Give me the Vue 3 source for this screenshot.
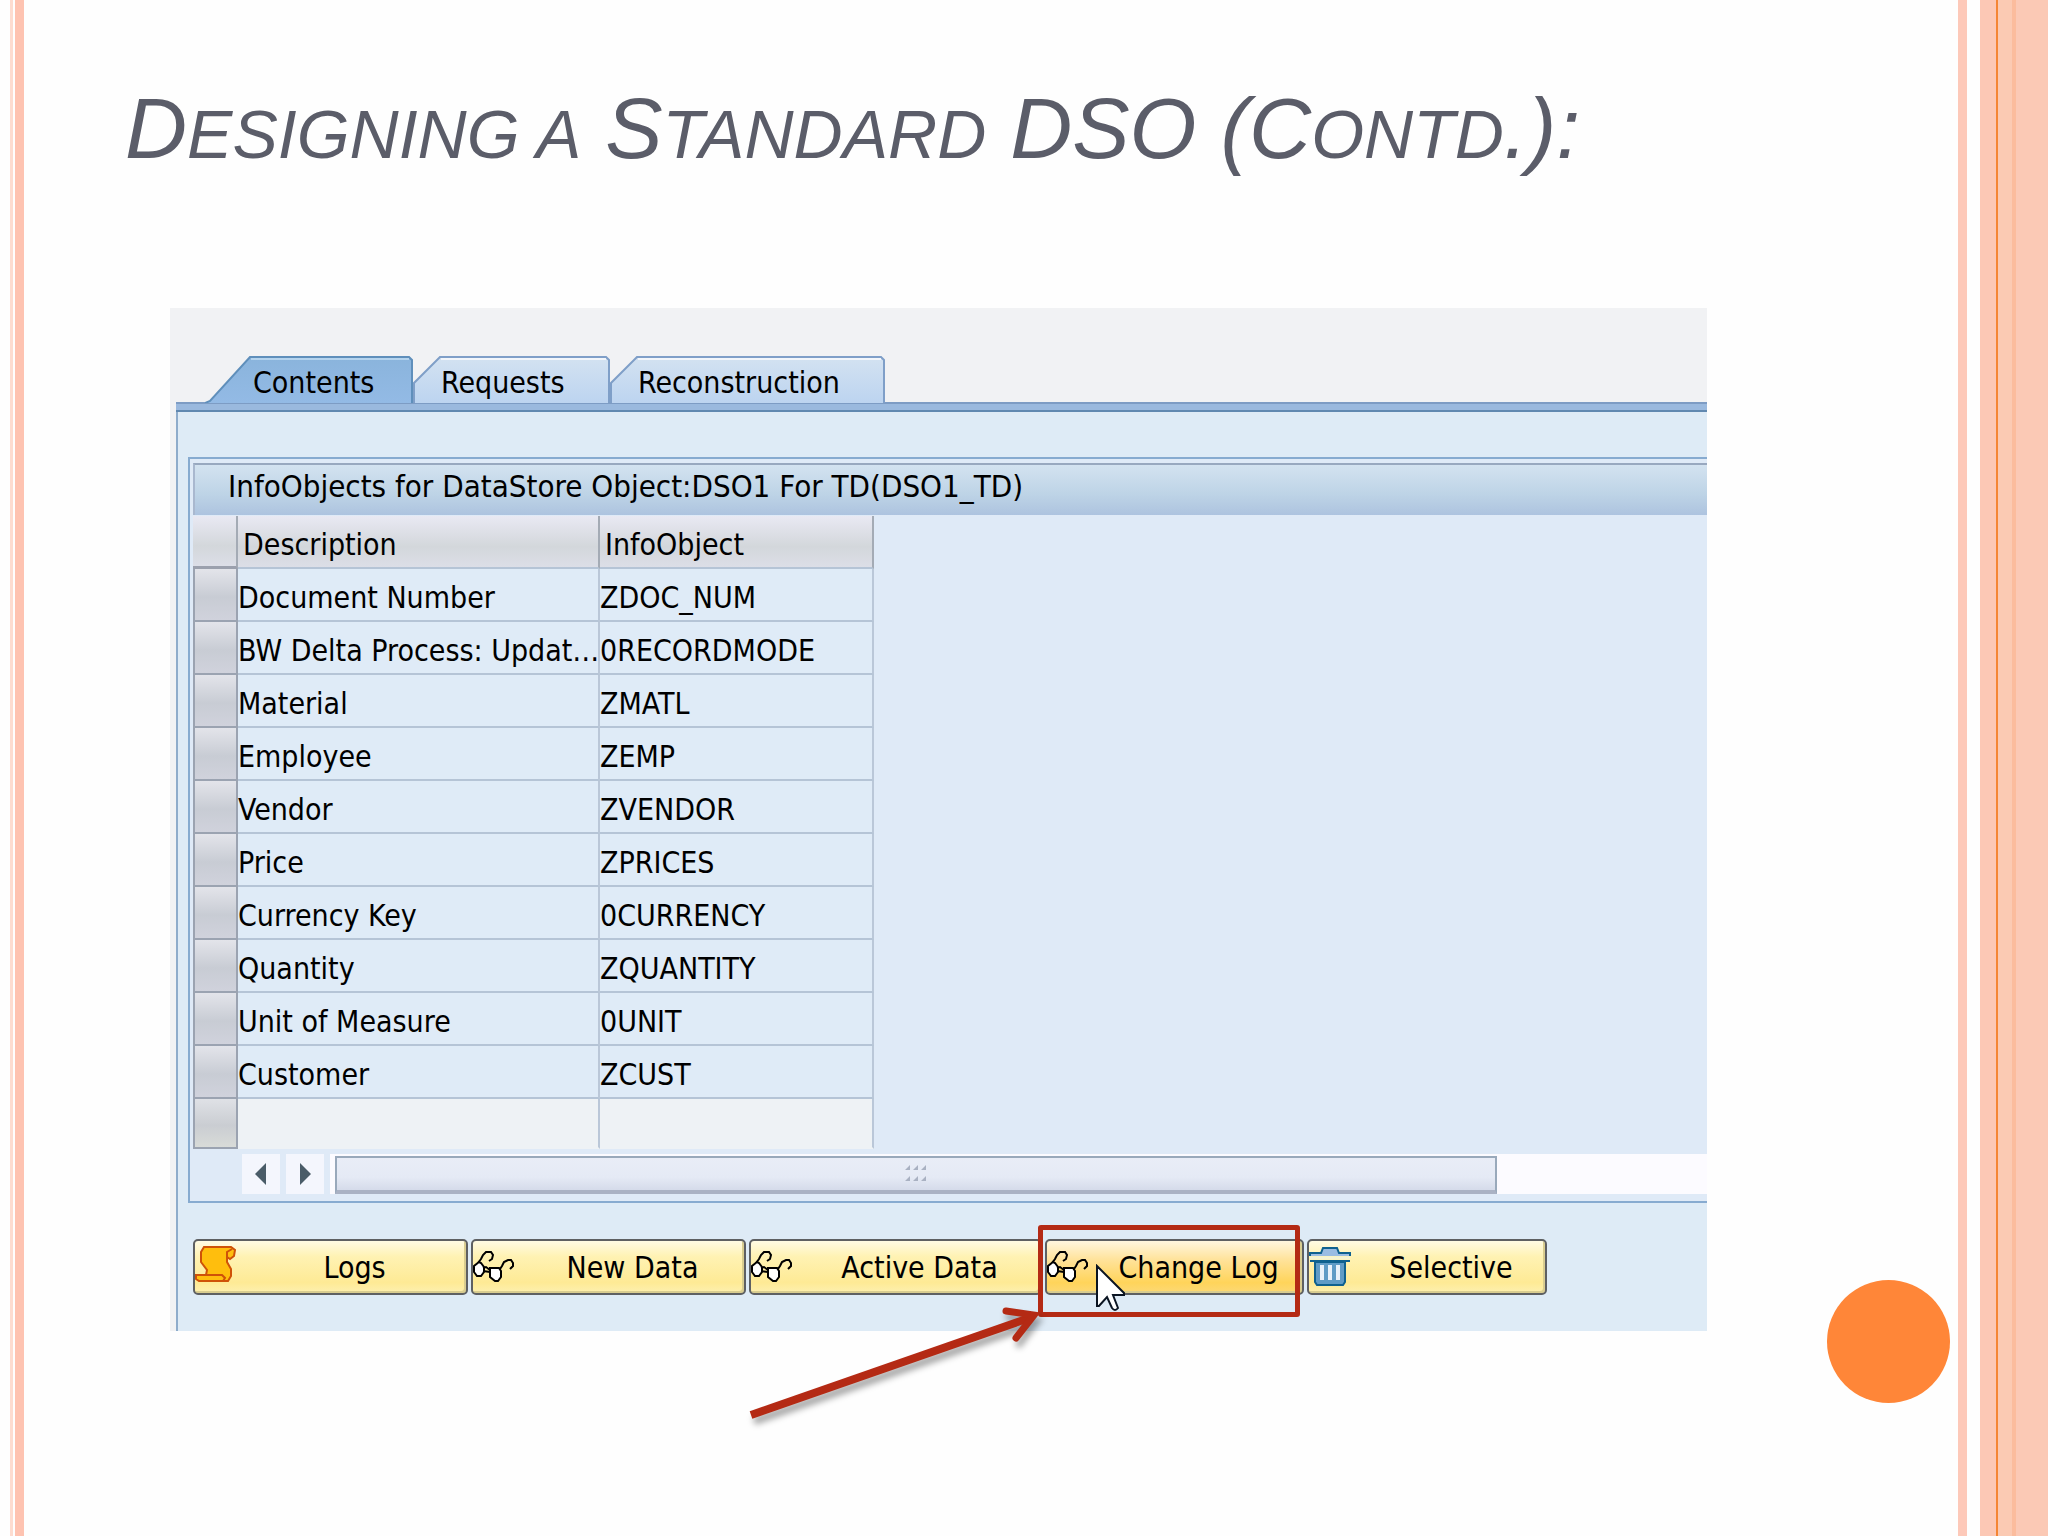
<script setup>
import { ref } from 'vue';

const title = [
  { big: 'D', small: 'esigning a' },
  { big: ' S', small: 'tandard' },
  { big: ' DSO (C', small: 'ontd' },
  { big: '.):', small: '' }
];

const tabs = [
  {
    id: 'contents',
    label: 'Contents',
    width: 208,
    shape: 'M0 47 L5 45 L45 1 H204 L207 4 V47',
    shine: 'M46 3 H204'
  },
  {
    id: 'requests',
    label: 'Requests',
    width: 197,
    shape: 'M1 47 V27 L27 1 H193 L196 4 V47',
    shine: 'M28 3 H193'
  },
  {
    id: 'reconstruction',
    label: 'Reconstruction',
    width: 275,
    shape: 'M1 47 V27 L27 1 H271 L274 4 V47',
    shine: 'M28 3 H271'
  }
];
const activeTab = ref('contents');

const rows = [
  { description: 'Document Number', object: 'ZDOC_NUM' },
  { description: 'BW Delta Process: Updat…', object: '0RECORDMODE' },
  { description: 'Material', object: 'ZMATL' },
  { description: 'Employee', object: 'ZEMP' },
  { description: 'Vendor', object: 'ZVENDOR' },
  { description: 'Price', object: 'ZPRICES' },
  { description: 'Currency Key', object: '0CURRENCY' },
  { description: 'Quantity', object: 'ZQUANTITY' },
  { description: 'Unit of Measure', object: '0UNIT' },
  { description: 'Customer', object: 'ZCUST' }
];

const actions = [
  { id: 'logs', label: 'Logs', icon: 'scroll' },
  { id: 'new', label: 'New Data', icon: 'glasses' },
  { id: 'active', label: 'Active Data', icon: 'glasses' },
  { id: 'change', label: 'Change Log', icon: 'glasses', marked: true },
  { id: 'selective', label: 'Selective', icon: 'trash' }
];
</script>

<template>
  <div class="slide">
    <div class="stripes-left">
      <span class="line thin"></span>
      <span class="line thick"></span>
    </div>

    <main class="content">
      <h1 class="title">
        <template v-for="part in title" :key="part.big">{{ part.big }}<span class="small">{{ part.small }}</span></template>
      </h1>

      <section class="window">
        <div class="tabs" role="tablist">
          <button
            v-for="tab in tabs"
            :key="tab.id"
            type="button"
            role="tab"
            class="tab"
            :class="{ active: tab.id === activeTab, first: tab.id === 'contents' }"
            :style="{ width: tab.width + 'px' }"
            :aria-selected="tab.id === activeTab"
            @click="activeTab = tab.id"
          >
            <svg class="tab-shape" :width="tab.width" height="47" aria-hidden="true">
              <defs>
                <linearGradient :id="'fill-' + tab.id" x1="0" y1="0" x2="0" y2="1">
                  <stop offset="0" :stop-color="tab.id === activeTab ? '#8ab4dc' : '#d3e2f1'" />
                  <stop offset="1" :stop-color="tab.id === activeTab ? '#93bae5' : '#bcd4f0'" />
                </linearGradient>
              </defs>
              <path
                :d="tab.shape"
                :fill="`url(#fill-${tab.id})`"
                :stroke="tab.id === activeTab ? '#5f8fbb' : '#7f9fc8'"
                stroke-width="2"
              />
              <path :d="tab.shine" :stroke="tab.id === activeTab ? '#b5d4ee' : '#f2f6fb'" stroke-width="2" />
            </svg>
            <span class="tab-label">{{ tab.label }}</span>
          </button>
        </div>
        <div class="band"></div>

        <div class="body">
          <div class="frame">
            <h2 class="grid-title">InfoObjects for DataStore Object:DSO1 For TD(DSO1_TD)</h2>
            <table class="grid">
              <colgroup>
                <col class="col-select" />
                <col class="col-description" />
                <col class="col-object" />
              </colgroup>
              <thead>
                <tr>
                  <td class="corner"></td>
                  <th scope="col">Description</th>
                  <th scope="col">InfoObject</th>
                </tr>
              </thead>
              <tbody>
                <tr v-for="row in rows" :key="row.object">
                  <td class="select"></td>
                  <td>{{ row.description }}</td>
                  <td>{{ row.object }}</td>
                </tr>
                <tr class="empty">
                  <td class="select"></td>
                  <td></td>
                  <td></td>
                </tr>
              </tbody>
            </table>

            <div class="scrollbar">
              <button type="button" class="scroll-button" aria-label="Scroll left">
                <svg width="12" height="22" viewBox="0 0 12 22"><path d="M11 0 V22 L0 11 Z" fill="#4a5c68" /></svg>
              </button>
              <button type="button" class="scroll-button" aria-label="Scroll right">
                <svg width="12" height="22" viewBox="0 0 12 22"><path d="M1 0 V22 L12 11 Z" fill="#4a5c68" /></svg>
              </button>
              <div class="track">
                <div class="thumb">
                  <svg width="22" height="18" viewBox="0 0 22 18">
                    <path
                      d="M5 0 V5 H0 Z M13 0 V5 H8 Z M21 0 V5 H16 Z M5 11 V16 H0 Z M13 11 V16 H8 Z M21 11 V16 H16 Z"
                      fill="#a9b1c2"
                    />
                  </svg>
                </div>
              </div>
            </div>
          </div>

          <div class="actions">
            <div v-for="action in actions" :key="action.id" class="action" :class="action.id">
              <button type="button" class="action-button" :class="{ hovered: action.marked }">
                <svg v-if="action.icon === 'scroll'" class="icon" viewBox="0 0 42 42" aria-hidden="true">
                  <path
                    d="M9 1 H36 L40 4 L39 10 L35 13 L32 11 V16 L36 23 V30 L33 35 H4 L1 33 V29 H11 L12 24 L6 16 V6 Z"
                    fill="#ffbe0d"
                    stroke="#cf5208"
                    stroke-width="2"
                  />
                  <path d="M1 29 H27 L30 32 L28 35 M32 11 V6 L37 3" fill="none" stroke="#cf5208" stroke-width="2" />
                </svg>
                <svg v-else-if="action.icon === 'glasses'" class="icon" viewBox="0 0 42 42" aria-hidden="true">
                  <g stroke="#000" stroke-width="2" fill="none">
                    <path d="M5 17 L8 13 L10 9 L13 6 H18 L20 9 L19 13 L16 15" />
                    <path d="M6 16 L1 20 V26 L4 30 H8 L11 26 V21 L8 17 Z" fill="#fff" />
                    <path d="M10 22 L13 21 L17 24 M10 25 L17 26" />
                    <path d="M17 22 H26 L28 25 V31 L25 35 H22 L17 31 Z" fill="#fff" />
                    <path d="M27 23 L29 20 L31 16 L35 14 H38 L40 17 V20 L37 23" />
                  </g>
                </svg>
                <svg v-else class="icon" viewBox="0 0 42 42" aria-hidden="true">
                  <path d="M6 16 H36 V36 L34 39 H8 L6 36 Z" fill="#5f9bc6" stroke="#0f618f" stroke-width="2" />
                  <path d="M13 19 V34 M21 19 V34 M29 19 V34" stroke="#e9f1fa" stroke-width="4" />
                  <path d="M1 10 V7 H12 L14 2 H28 L30 7 H41 V10" fill="#9bbce2" stroke="#0f618f" stroke-width="2" />
                  <path d="M1 12 H41" stroke="#f6f3d2" stroke-width="3" />
                  <path d="M1 15 H41" stroke="#0f618f" stroke-width="2" />
                </svg>
                <span class="action-label">{{ action.label }}</span>
              </button>

              <template v-if="action.marked">
                <svg class="cursor" width="32" height="48" viewBox="0 0 32 48" aria-hidden="true">
                  <path
                    d="M2 2 V42 H4 L12 33 L17 44 Q20 48 23 44 L18 31 H29 V29 Z"
                    fill="#fff"
                    stroke="#0b1522"
                    stroke-width="2"
                  />
                </svg>
                <span class="mark"></span>
                <svg class="arrow" width="300" height="130" viewBox="0 0 300 130" aria-hidden="true">
                  <path d="M7 111 L288 13" fill="none" stroke="#b42a14" stroke-width="8" />
                  <path
                    d="M262 7 L290 11 L272 34"
                    fill="none"
                    stroke="#b42a14"
                    stroke-width="7"
                    stroke-linecap="round"
                  />
                </svg>
              </template>
            </div>
          </div>
        </div>
      </section>
    </main>

    <span class="disc"></span>

    <div class="stripes-right">
      <span class="line narrow"></span>
      <span class="line outer"></span>
      <span class="line accent"></span>
      <span class="line inner"></span>
      <span class="line shade"></span>
      <span class="line edge"></span>
    </div>
  </div>
</template>

<style>
body {
  margin: 0;
  background: #fefefe;
}
</style>

<style scoped>
.slide {
  position: relative;
  display: flex;
  min-height: 100vh;
  background: #fefefe;
  font-family: "DejaVu Sans Condensed", "Open Sans", sans-serif;
  font-size: 30px;
  color: #000;
}

.stripes-left,
.stripes-right {
  display: flex;
  flex: none;
}

.stripes-left {
  padding-left: 10px;
  gap: 2px;
}

.thin {
  width: 3px;
  background: #fddcd0;
}

.thick {
  width: 9px;
  background: #fec3b1;
}

.narrow {
  width: 9px;
  margin-right: 13px;
  background: #fdc9b9;
}

.outer {
  width: 16px;
  background: #fcc8b5;
}

.accent {
  width: 2px;
  background: #f58634;
}

.inner {
  width: 14px;
  background: #fbcab3;
}

.shade {
  width: 4px;
  background: #fbbc9d;
}

.edge {
  width: 32px;
  background: #fbc9b5;
}

.content {
  flex: 1;
  min-width: 0;
  padding: 78px 0 0 101px;
}

.title {
  margin: 0 0 124px;
  font: italic 400 86px/100px "Liberation Sans", Arial, sans-serif;
  color: #5b5d69;
  white-space: pre;
}

.small {
  font-size: 68px;
  text-transform: uppercase;
}

.window {
  margin: 0 251px 0 45px;
  background: #f1f2f4;
}

.tabs {
  display: flex;
  padding: 48px 0 0 35px;
}

.tab {
  position: relative;
  height: 46px;
  padding: 6px 0 0 28px;
  border: 0;
  background: none;
  font: inherit;
  color: inherit;
  text-align: left;
  cursor: pointer;
}

.tab.first {
  padding-left: 48px;
}

.tab-shape {
  position: absolute;
  left: 0;
  top: 0;
}

.tab-label {
  position: relative;
}

.band {
  height: 6px;
  margin-left: 6px;
  border-top: 2px solid #7d9cc4;
  border-bottom: 2px solid #6088b0;
  background: #9ab9de;
}

.body {
  margin-left: 6px;
  padding: 45px 0 36px 10px;
  border-left: 2px solid #8eaccb;
  background: #deebf6;
}

.frame {
  padding: 4px 0 7px 3px;
  border: 2px solid #87abd0;
  border-right: 0;
  background: #dfeaf7;
}

.grid-title {
  margin: 0 0 1px;
  padding: 0 0 8px 33px;
  border-top: 2px solid #98a8bf;
  border-left: 2px solid #a9b8cf;
  background: linear-gradient(#d3e2f0, #bdd3e6 60%, #adc3df);
  font: inherit;
  font-size: 31px;
  line-height: 42px;
  white-space: nowrap;
}

.grid {
  width: 681px;
  table-layout: fixed;
  border-collapse: separate;
  border-spacing: 0;
}

.col-select {
  width: 45px;
}

.col-description {
  width: 362px;
}

.grid th,
.grid td {
  box-sizing: border-box;
  height: 53px;
  padding: 6px 0 0;
  border-right: 2px solid #bac7d8;
  border-bottom: 2px solid #b5c4d6;
  background: #dfebf7;
  font-weight: 400;
  line-height: 36px;
  text-align: left;
  white-space: nowrap;
}

.grid th,
.grid .corner {
  border-right-color: #a4abb5;
  background: linear-gradient(#e9e9f3, #d3d7db 60%, #dcdee7);
}

.grid th {
  padding-left: 5px;
}

.grid .corner {
  border-bottom: 3px solid #9ba0ad;
}

.grid .select {
  border: 2px solid #9ba3b1;
  border-top-width: 0;
  background: linear-gradient(#e3e4ea, #c8ccd4 55%, #d0d2dc);
}

.grid .empty td {
  height: 50px;
  border-bottom-color: #eef2f5;
  background: #eef2f5;
}

.grid .empty .select {
  border-bottom-color: #9ba3b1;
  background: linear-gradient(#dfe1e6, #cacdd2 55%, #d8dbd8);
}

.scrollbar {
  display: flex;
  gap: 6px;
  height: 40px;
  margin-top: 5px;
  padding-left: 49px;
}

.scroll-button {
  display: flex;
  align-items: center;
  justify-content: center;
  width: 38px;
  padding: 0;
  border: 0;
  background: #f4f6fd;
}

.track {
  display: flex;
  flex: 1;
  background: #fcfbff;
}

.thumb {
  display: flex;
  flex: 1;
  align-items: center;
  justify-content: center;
  margin: 2px 210px 0 5px;
  border: 2px solid #99a9bb;
  border-bottom: 4px solid #aab2c4;
  background: linear-gradient(#e9edf7, #e5eaf5 60%, #d5dbea);
}

.actions {
  display: flex;
  gap: 3px;
  padding: 36px 0 0 5px;
}

.action {
  position: relative;
  width: 275px;
}

.action.active {
  width: 293px;
}

.action.change {
  width: 259px;
}

.action.selective {
  width: 240px;
}

.action-button {
  display: flex;
  align-items: center;
  width: 100%;
  height: 56px;
  padding: 0;
  border: 2px solid #5e6062;
  border-radius: 5px;
  background: linear-gradient(#fffbe4, #fff2b3 30%, #feea95 80%, #fdf0b0);
  box-shadow: inset -2px -2px 0 #d9cd90;
  font: inherit;
  color: inherit;
  cursor: pointer;
}

.action-button.hovered {
  background: linear-gradient(#fff6df, #ffe39c 35%, #ffd45a 80%, #fcd976);
}

.icon {
  flex: none;
  width: 42px;
  height: 42px;
}

.action-label {
  flex: 1;
  padding-left: 6px;
  white-space: nowrap;
}

.cursor {
  position: absolute;
  left: 50px;
  top: 25px;
}

.mark {
  position: absolute;
  inset: -14px 4px -22px -7px;
  border: 5px solid #b42a14;
  border-radius: 3px;
}

/* points at the lower left corner of the mark */
.arrow {
  position: absolute;
  left: -301px;
  top: 65px;
  overflow: visible;
  filter: drop-shadow(3px 6px 3px rgba(0, 0, 0, 0.35));
}

.disc {
  position: absolute;
  right: 98px;
  bottom: 133px;
  width: 123px;
  height: 123px;
  border-radius: 50%;
  background: #ff8638;
}
</style>
